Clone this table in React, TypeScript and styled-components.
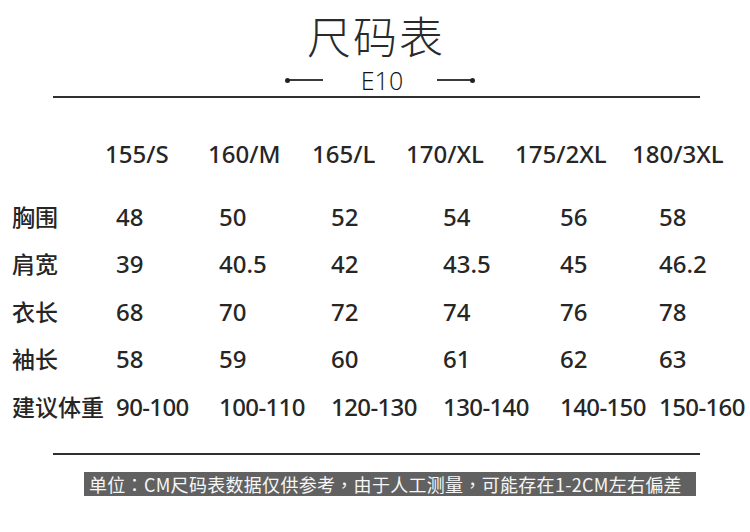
import React from "react";
import styled, { createGlobalStyle } from "styled-components";

const Global = createGlobalStyle`
  html, body { margin: 0; padding: 0; background: #ffffff; }
  body { width: 750px; height: 532px; overflow: hidden; }
`;

const Page = styled.div`
  width: 750px;
  height: 532px;
  background: #fff;
  color: #262626;
  display: flex;
  flex-direction: column;
  font-family: "Noto Sans", "Open Sans", "Noto Sans CJK SC", sans-serif;
`;

const Title = styled.h1`
  margin: 13px 0 0 2px;
  font-family: "Noto Sans CJK SC", sans-serif;
  font-weight: 300;
  font-size: 44px;
  line-height: 44px;
  letter-spacing: 2px;
  text-align: center;
  color: #2a2a2a;
`;

const SubRow = styled.div`
  margin-top: 11px;
  height: 24px;
  display: flex;
  align-items: center;
  justify-content: center;
  padding-left: 10px;
`;

const Ornament = styled.span<{ $side: "left" | "right" }>`
  position: relative;
  width: 36px;
  height: 1.5px;
  background: #3a3a3a;
  &::after {
    content: "";
    position: absolute;
    top: -1.5px;
    ${(p) => (p.$side === "left" ? "left: -2px;" : "right: -2px;")}
    width: 5px;
    height: 5px;
    border-radius: 50%;
    background: #222;
  }
`;

const Code = styled.span`
  margin: 0 34px 0 38px;
  font-family: "Open Sans", sans-serif;
  font-weight: 300;
  font-size: 25px;
  line-height: 24px;
  color: #111;
`;

const Rule = styled.div<{ $top: number }>`
  margin: ${(p) => p.$top}px 50px 0 53px;
  height: 2px;
  background: #2f2f2f;
`;

const HeaderRow = styled.div`
  margin-top: 32px;
  display: grid;
  grid-template-columns: 103px 104px 94px 109px 117px auto;
  padding-left: 105px;
  height: 47.5px;
  line-height: 47.5px;
  font-size: 24px;
  font-weight: 500;
`;

const Table = styled.div`
  margin-top: 15px;
  display: grid;
  grid-template-columns: 104px 103px 112px 112px 117px 99px auto;
  grid-auto-rows: 47.5px;
  padding-left: 12px;
  line-height: 47.5px;
  font-size: 24px;
  font-weight: 500;
`;

const Label = styled.div`
  font-family: "Noto Sans CJK SC", sans-serif;
  font-weight: 500;
  font-size: 23px;
  white-space: nowrap;
`;

const Cell = styled.div<{ $tight?: boolean }>`
  white-space: nowrap;
  letter-spacing: ${(p) => (p.$tight ? "-0.6px" : "0")};
`;

const Note = styled.div`
  margin: 17px 0 0 84px;
  width: 612px;
  height: 24px;
  box-sizing: border-box;
  padding-left: 5px;
  background: #616161;
  color: #f6f6f6;
  font-family: "Noto Sans CJK TC", "Noto Sans CJK SC", sans-serif;
  font-size: 18px;
  line-height: 24px;
  letter-spacing: 0.3px;
  white-space: nowrap;
`;

const sizes = ["155/S", "160/M", "165/L", "170/XL", "175/2XL", "180/3XL"];

const rows: { label: string; values: string[]; tight?: boolean }[] = [
  { label: "胸围", values: ["48", "50", "52", "54", "56", "58"] },
  { label: "肩宽", values: ["39", "40.5", "42", "43.5", "45", "46.2"] },
  { label: "衣长", values: ["68", "70", "72", "74", "76", "78"] },
  { label: "袖长", values: ["58", "59", "60", "61", "62", "63"] },
  {
    label: "建议体重",
    values: ["90-100", "100-110", "120-130", "130-140", "140-150", "150-160"],
    tight: true,
  },
];

export default function App() {
  return (
    <Page>
      <Global />
      <Title>尺码表</Title>
      <SubRow>
        <Ornament $side="left" />
        <Code>E10</Code>
        <Ornament $side="right" />
      </SubRow>
      <Rule $top={4} />
      <HeaderRow>
        {sizes.map((s) => (
          <Cell key={s}>{s}</Cell>
        ))}
      </HeaderRow>
      <Table>
        {rows.map((r) => (
          <React.Fragment key={r.label}>
            <Label>{r.label}</Label>
            {r.values.map((v, i) => (
              <Cell key={i} $tight={r.tight}>
                {v}
              </Cell>
            ))}
          </React.Fragment>
        ))}
      </Table>
      <Rule $top={23} />
      <Note>单位：CM尺码表数据仅供参考，由于人工测量，可能存在1-2CM左右偏差</Note>
    </Page>
  );
}
